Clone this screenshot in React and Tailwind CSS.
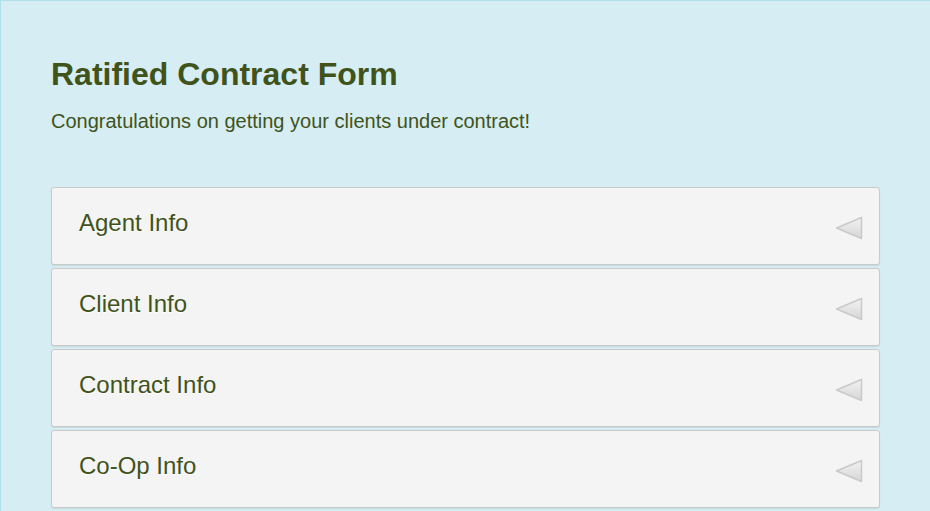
import React from 'react';

const sections = ['Agent Info', 'Client Info', 'Contract Info', 'Co-Op Info'];

function Arrow() {
  return (
    <svg width="28" height="24" viewBox="0 0 28 24" className="shrink-0">
      <defs>
        <linearGradient id="tri" x1="0" y1="0" x2="0" y2="1">
          <stop offset="0" stopColor="#f2f2f2" />
          <stop offset="1" stopColor="#d6d6d6" />
        </linearGradient>
      </defs>
      <polygon
        points="1.5,12 26.5,1.5 26.5,22.5"
        fill="url(#tri)"
        stroke="#c9c9c9"
        strokeWidth="1.5"
        strokeLinejoin="round"
      />
    </svg>
  );
}

export default function App() {
  return (
    <div className="min-h-[511px] w-[930px] bg-[#d5edf3] border-t border-l border-[#aee0ee] px-[50px] pt-[55px] font-['Liberation_Sans',Arial,sans-serif] text-[#3f531b]">
      {/* HEADER */}
      <h1 className="text-[32px] leading-[36px] font-bold">Ratified Contract Form</h1>
      <p className="mt-[17px] text-[20px] leading-[24px]">
        Congratulations on getting your clients under contract!
      </p>

      {/* SECTIONS */}
      <div className="mt-[54px] flex flex-col gap-[3px]">
        {sections.map(name => (
          <div
            key={name}
            className="h-[78px] flex items-center justify-between rounded-[3px] border border-[#cacaca] bg-[#f4f4f4] pl-[27px] pr-[16px] shadow-[0_1px_1px_rgba(0,0,0,0.08)]"
          >
            <span className="mb-[6px] text-[24px] leading-none [text-shadow:0_1px_0_#fff]">{name}</span>
            <div className="mt-[4px] ml-px">
              <Arrow />
            </div>
          </div>
        ))}
      </div>
    </div>
  );
}
